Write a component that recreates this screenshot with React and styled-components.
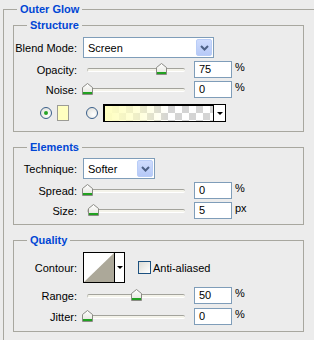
import React from 'react'
import styled, { createGlobalStyle } from 'styled-components'

const GlobalStyle = createGlobalStyle`
  html, body {
    margin: 0;
    padding: 0;
    background: #ececec;
  }
  body {
    width: 314px;
    height: 340px;
    overflow: hidden;
    font-family: "Liberation Sans", Arial, sans-serif;
    font-size: 11px;
    color: #000;
  }
`

const LINE = '#a8a79f'
const FIELD = '#7f9db9'

// outer box: only the top and left lines show, the rest runs off the window
const Panel = styled.div`
  box-sizing: border-box;
  width: 311px;
  height: 331px;
  margin: 9px 0 0 3px;
  padding: 0 0 0 9px;
  border-top: 1px solid ${LINE};
  border-left: 1px solid ${LINE};
`

// the heading sits on the box's top line and hides it behind its text
const Heading = styled.div`
  display: flex;
  height: 14px;
  margin-top: -8px;
  padding-left: ${p => p.$indent}px;
`

const HeadingText = styled.span`
  padding: 0 3px;
  line-height: 14px;
  font-weight: bold;
  color: #0046d5;
  background: #ececec;
`

const Group = styled.div`
  box-sizing: border-box;
  width: 291px;
  margin-top: ${p => (p.$first ? 9 : 15)}px;
  padding-bottom: ${p => p.$pb}px;
  border: 1px solid ${LINE};
`

const Rows = styled.div`
  display: flex;
  flex-direction: column;
  gap: ${p => p.$gap || 3}px;
  margin-top: ${p => p.$mt}px;
`

const Row = styled.div`
  display: flex;
  align-items: center;
  height: ${p => p.$h || 17}px;
  margin-top: ${p => p.$mt || 0}px;
  padding-left: ${p => p.$pl || 0}px;
`

const Label = styled.div`
  flex-shrink: 0;
  width: 63px;
  margin-right: 6px;
  text-align: right;
  white-space: nowrap;
`

const Select = styled.div`
  box-sizing: border-box;
  display: flex;
  align-items: stretch;
  width: ${p => p.$w}px;
  height: 21px;
  padding: 1px;
  background: #fff;
  border: 1px solid ${FIELD};
`

const SelectText = styled.div`
  flex: 1;
  display: flex;
  align-items: center;
  padding-left: 3px;
`

const DropButton = styled.div`
  box-sizing: border-box;
  display: flex;
  align-items: center;
  justify-content: center;
  width: 16px;
  border-radius: 2px;
  border: 1px solid #b9cdf7;
  background: linear-gradient(to bottom, #cfdcfd, #b6c9f7);
`

const Slider = styled.div`
  position: relative;
  flex-shrink: 0;
  display: flex;
  align-items: center;
  width: 106px;
  height: 17px;
  margin-right: 5px;
`

const Track = styled.div`
  box-sizing: border-box;
  width: 98px;
  height: 4px;
  margin-left: 4px;
  border-radius: 2px;
  background: #f4f3ea;
  border-top: 1px solid #a3a39c;
  border-left: 1px solid #c4c4bc;
  border-bottom: 1px solid #fff;
`

const Thumb = styled.svg`
  position: absolute;
  top: 2px;
`

const Field = styled.div`
  box-sizing: border-box;
  width: 38px;
  height: 17px;
  padding-left: 4px;
  line-height: 15px;
  background: #fff;
  border: 1px solid ${FIELD};
`

const Unit = styled.div`
  align-self: flex-start;
  margin-left: 3px;
  line-height: 13px;
`

const Radio = styled.div`
  box-sizing: border-box;
  display: flex;
  align-items: center;
  justify-content: center;
  width: 12px;
  height: 12px;
  margin-left: ${p => p.$ml}px;
  border-radius: 50%;
  border: 1px solid #3a5f8a;
  background: radial-gradient(circle at 65% 65%, #ffffff, #dcdcd6);
  &::after {
    content: '';
    display: ${p => (p.$on ? 'block' : 'none')};
    width: 4px;
    height: 4px;
    border-radius: 50%;
    background: #27a327;
  }
`

const Swatch = styled.div`
  box-sizing: border-box;
  width: 12px;
  height: 16px;
  margin-left: 5px;
  background: #ffffc0;
  border: 1px solid #9c9c96;
`

const GradientBox = styled.div`
  box-sizing: border-box;
  display: flex;
  width: 123px;
  height: 18px;
  margin-left: 5px;
  border: 1px solid #000;
  box-shadow: inset 1px 1px 0 #000;
`

const Gradient = styled.div`
  flex: 1;
  margin: 1px 0 0 1px;
  background:
    linear-gradient(to right, #ffffc0 0%, rgba(255, 255, 192, 0.6) 30%, rgba(255, 255, 192, 0) 60%),
    repeating-conic-gradient(#d4d4d4 0% 25%, #ffffff 0% 50%) 0 0 / 14px 14px;
`

const ArrowCell = styled.div`
  display: flex;
  align-items: center;
  justify-content: center;
  width: 11px;
  background: #fff;
  border-left: 1px solid #000;
`

const Arrow = styled.div`
  width: 0;
  height: 0;
  border-left: 3px solid transparent;
  border-right: 3px solid transparent;
  border-top: 3px solid #000;
`

const ContourBox = styled.div`
  box-sizing: border-box;
  display: flex;
  width: 42px;
  height: 31px;
  border: 1px solid #000;
`

const Preview = styled.svg`
  display: block;
  flex-shrink: 0;
`

const Check = styled.div`
  box-sizing: border-box;
  width: 13px;
  height: 13px;
  margin-left: 13px;
  border: 1px solid #1c5180;
  background: linear-gradient(135deg, #dcdcd5, #ffffff);
`

const CheckText = styled.span`
  margin-left: 2px;
`

const Chevron = () => (
  <svg width="9" height="6" viewBox="0 0 9 6">
    <path d="M1 1 L4.5 4.5 L8 1" fill="none" stroke="#4d6185" strokeWidth="2" />
  </svg>
)

const Title = ({ indent, children }) => (
  <Heading $indent={indent}>
    <HeadingText>{children}</HeadingText>
  </Heading>
)

const Dropdown = ({ width, value }) => (
  <Select $w={width}>
    <SelectText>{value}</SelectText>
    <DropButton>
      <Chevron />
    </DropButton>
  </Select>
)

const SliderRow = ({ label, value, unit, pos }) => (
  <Row>
    <Label>{label}</Label>
    <Slider>
      <Track />
      <Thumb width="11" height="12" viewBox="0 0 11 12" style={{ left: 4 + pos * 98 - 5 }}>
        <defs>
          <linearGradient id="thumbFill" x1="0" y1="0" x2="0" y2="1">
            <stop offset="0" stopColor="#ffffff" />
            <stop offset="1" stopColor="#e3e3dc" />
          </linearGradient>
        </defs>
        <path d="M0.5 11.5 V4.5 L5.5 0.5 L10.5 4.5 V11.5 Z" fill="url(#thumbFill)" stroke="#8b8b85" />
        <rect x="1" y="9" width="9" height="2" fill="#21a121" />
      </Thumb>
    </Slider>
    <Field>{value}</Field>
    <Unit>{unit}</Unit>
  </Row>
)

export default function App() {
  return (
    <>
      <GlobalStyle />
      <Panel>
        <Title indent={4}>Outer Glow</Title>

        <Group $first $pb={9}>
          <Title indent={13}>Structure</Title>
          <Rows $mt={5}>
            <Row $h={21}>
              <Label>Blend Mode:</Label>
              <Dropdown width={131} value="Screen" />
            </Row>
            <SliderRow label="Opacity:" value="75" unit="%" pos={0.75} />
            <SliderRow label="Noise:" value="0" unit="%" pos={0} />
            <Row $h={18} $mt={3} $pl={26}>
              <Radio $on $ml={0} />
              <Swatch />
              <Radio $ml={17} />
              <GradientBox>
                <Gradient />
                <ArrowCell>
                  <Arrow />
                </ArrowCell>
              </GradientBox>
            </Row>
          </Rows>
        </Group>

        <Group $pb={5}>
          <Title indent={13}>Elements</Title>
          <Rows $mt={4}>
            <Row $h={21}>
              <Label>Technique:</Label>
              <Dropdown width={72} value="Softer" />
            </Row>
            <SliderRow label="Spread:" value="0" unit="%" pos={0} />
            <SliderRow label="Size:" value="5" unit="px" pos={0.06} />
          </Rows>
        </Group>

        <Group $pb={6}>
          <Title indent={13}>Quality</Title>
          <Rows $mt={5} $gap={4}>
            <Row $h={31}>
              <Label>Contour:</Label>
              <ContourBox>
                <Preview width="30" height="29" viewBox="0 0 30 29">
                  <rect width="30" height="29" fill="#fff" />
                  <polygon points="0,29 30,0 30,29" fill="#aca899" />
                </Preview>
                <ArrowCell>
                  <Arrow />
                </ArrowCell>
              </ContourBox>
              <Check />
              <CheckText>Anti-aliased</CheckText>
            </Row>
            <SliderRow label="Range:" value="50" unit="%" pos={0.5} />
            <SliderRow label="Jitter:" value="0" unit="%" pos={0} />
          </Rows>
        </Group>
      </Panel>
    </>
  )
}
